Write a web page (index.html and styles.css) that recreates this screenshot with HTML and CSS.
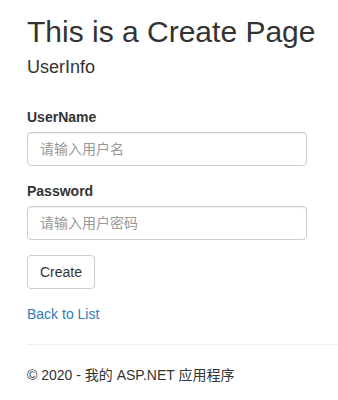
FILE: index.html
```html
<!DOCTYPE html>
<html lang="en">
<head>
    <meta charset="UTF-8">
    <meta name="viewport" content="width=device-width, initial-scale=1.0">
    <title>Create - 我的 ASP.NET 应用程序</title>
    <link rel="stylesheet" href="styles.css">
</head>
<body>
    <div class="container body-content">
        <h1 class="page-title">This is a Create Page</h1>
        <h4 class="sub-title">UserInfo</h4>

        <form class="form-horizontal" onsubmit="return false;">
            <div class="form-group">
                <label class="control-label" for="UserName">UserName</label>
                <input class="form-control" id="UserName" name="UserName" type="text" placeholder="请输入用户名">
            </div>
            <div class="form-group">
                <label class="control-label" for="Password">Password</label>
                <input class="form-control" id="Password" name="Password" type="password" placeholder="请输入用户密码">
            </div>
            <div class="form-group">
                <input type="submit" value="Create" class="btn btn-default">
            </div>
        </form>

        <div>
            <a href="#">Back to List</a>
        </div>

        <hr>
        <footer>
            <p>&copy; 2020 - 我的 ASP.NET 应用程序</p>
        </footer>
    </div>
</body>
</html>
```

FILE: styles.css
```css
body {
    margin: 0;
    font-family: "Liberation Sans", Arial, "Noto Sans CJK SC", sans-serif;
    font-size: 14px;
    line-height: 20px;
    color: #333;
    background-color: #fff;
}
.container {
    padding-left: 27px;
}
.page-title {
    margin: 15px 0 0;
    font-size: 30px;
    font-weight: 500;
    line-height: 33px;
}
.sub-title {
    margin: 9px 0 0;
    font-size: 18px;
    font-weight: 500;
    line-height: 20px;
}
.form-horizontal {
    margin-top: 30px;
}
.form-group {
    margin-bottom: 15px;
}
.control-label {
    display: inline-block;
    margin-bottom: 5px;
    font-weight: bold;
}
.form-control {
    display: block;
    box-sizing: border-box;
    width: 100%;
    max-width: 280px;
    height: 34px;
    padding: 6px 12px;
    font-family: inherit;
    font-size: 14px;
    line-height: 20px;
    color: #555;
    background-color: #fff;
    border: 1px solid #ccc;
    border-radius: 4px;
    box-shadow: inset 0 1px 1px rgba(0, 0, 0, .075);
}
.form-control::placeholder {
    color: #999;
}
.btn {
    display: inline-block;
    box-sizing: border-box;
    height: 34px;
    padding: 6px 12px;
    font-family: inherit;
    font-size: 14px;
    line-height: 20px;
    border: 1px solid transparent;
    border-radius: 4px;
    cursor: pointer;
}
.btn-default {
    color: #333;
    background-color: #fff;
    border-color: #ccc;
}
a {
    color: #337ab7;
    text-decoration: none;
}
hr {
    margin: 20px 0;
    border: 0;
    border-top: 1px solid #eee;
}
footer p {
    margin: 0 0 10px;
}
```
